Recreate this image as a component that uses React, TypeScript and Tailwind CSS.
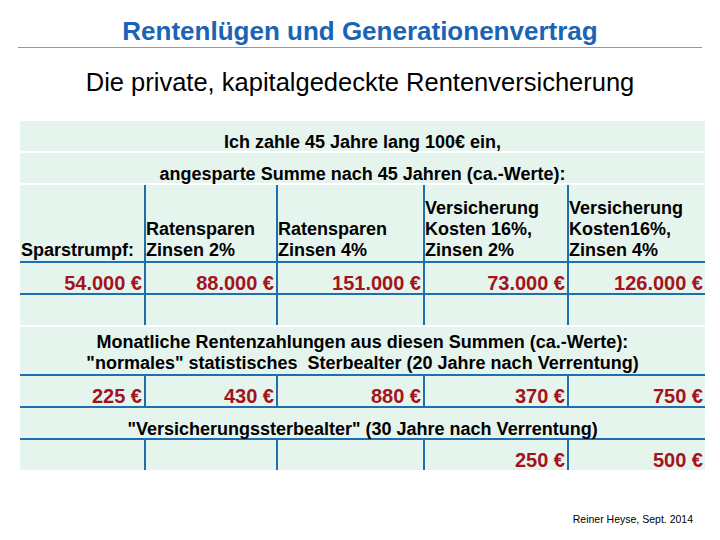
const cols = "grid grid-cols-[124px_132px_147px_144px_138px]";
const line = "border-[#1f6fad]";

const Value = ({ v, first }: { v?: string; first?: boolean }) => (
  <div
    className={`flex items-end justify-end pr-[2px] ${first ? "" : "border-l-2 " + line}`}
  >
    {v && <span className="text-[20px] font-bold leading-[20px] text-[#a3131b]">{v}</span>}
  </div>
);

const Header = ({ lines, first }: { lines: string[]; first?: boolean }) => (
  <div
    className={`flex flex-col justify-end ${first ? "pl-[1px]" : "border-l-2 " + line}`}
  >
    {lines.map((l, i) => (
      <span key={i} className="text-[18px] font-bold leading-[21px] whitespace-nowrap">
        {l}
      </span>
    ))}
  </div>
);

const ValueRow = ({ values, h, border }: { values: (string | undefined)[]; h: string; border?: boolean }) => (
  <div className={`${cols} ${h} ${border ? "border-b-2 " + line : ""}`}>
    {values.map((v, i) => (
      <Value key={i} v={v} first={i === 0} />
    ))}
  </div>
);

export default function App() {
  return (
    <div
      className="w-[720px] h-[540px] bg-white text-black overflow-hidden"
      style={{ fontFamily: '"Liberation Sans", Arial, sans-serif' }}
    >
      <h1 className="pt-[16px] text-center text-[26px] font-bold leading-[30px] text-[#1a63b5]">
        Rentenlügen und Generationenvertrag
      </h1>
      <div className="mx-[18px] mt-[1px] h-px bg-[#8d98b3]" />
      <h2 className="mt-[19px] text-center text-[25.5px] leading-[30px]">
        Die private, kapitalgedeckte Rentenversicherung
      </h2>

      <div className="mt-[24px] ml-[20px] w-[685px] bg-white">
        <div className="flex h-[30px] items-end justify-center bg-[#e6f4ee]">
          <span className="text-[18px] font-bold leading-[18px]">Ich zahle 45 Jahre lang 100€ ein,</span>
        </div>
        <div className="mt-[2px] flex h-[30px] items-end justify-center bg-[#e6f4ee]">
          <span className="text-[18px] font-bold leading-[18px]">
            angesparte Summe nach 45 Jahren (ca.-Werte):
          </span>
        </div>

        <div className="mt-[2px] bg-[#e6f4ee]">
          <div className={`${cols} h-[78px] border-b-2 ${line}`}>
            <Header first lines={["Sparstrumpf:"]} />
            <Header lines={["Ratensparen", "Zinsen 2%"]} />
            <Header lines={["Ratensparen", "Zinsen 4%"]} />
            <Header lines={["Versicherung", "Kosten 16%,", "Zinsen 2%"]} />
            <Header lines={["Versicherung", "Kosten16%,", "Zinsen 4%"]} />
          </div>
          <ValueRow border h="h-[32px]" values={["54.000 €", "88.000 €", "151.000 €", "73.000 €", "126.000 €"]} />
          <ValueRow h="h-[30px]" values={[undefined, undefined, undefined, undefined, undefined]} />
        </div>

        <div className="mt-[2px] bg-[#e6f4ee]">
          <div className={`flex h-[49px] flex-col items-center pt-[5px] border-b-2 ${line}`}>
            <span className="text-[18px] font-bold leading-[21px] whitespace-pre">
              Monatliche Rentenzahlungen aus diesen Summen (ca.-Werte):
            </span>
            <span className="text-[18px] font-bold leading-[21px] whitespace-pre">
              {'"normales" statistisches  Sterbealter (20 Jahre nach Verrentung)'}
            </span>
          </div>
          <ValueRow border h="h-[32px]" values={["225 €", "430 €", "880 €", "370 €", "750 €"]} />
          <div className={`flex h-[32px] items-end justify-center border-b-2 ${line}`}>
            <span className="text-[18px] font-bold leading-[18px]">
              {'"Versicherungssterbealter" (30 Jahre nach Verrentung)'}
            </span>
          </div>
          <ValueRow h="h-[30px]" values={[undefined, undefined, undefined, "250 €", "500 €"]} />
        </div>
      </div>

      <div className="mt-[42px] pr-[27px] text-right text-[10.5px] leading-[14px]">Reiner Heyse, Sept. 2014</div>
    </div>
  );
}
